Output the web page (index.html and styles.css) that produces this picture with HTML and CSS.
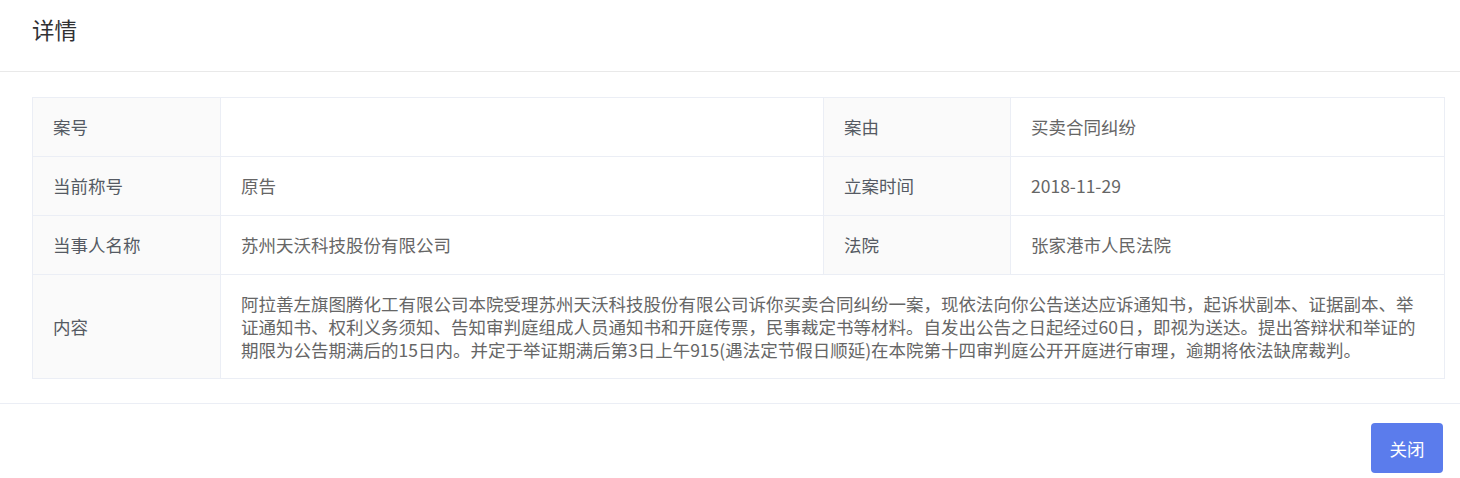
FILE: index.html
```html
<!DOCTYPE html>
<html lang="zh-CN">
<head>
<meta charset="utf-8">
<title>详情</title>
<link rel="stylesheet" href="styles.css">
</head>
<body>
<div class="dialog">
  <div class="dialog-header"><span class="dialog-title">详情</span></div>
  <div class="dialog-body">
    <table class="desc">
      <colgroup>
        <col class="c-label1">
        <col class="c-value1">
        <col class="c-label2">
        <col class="c-value2">
      </colgroup>
      <tr>
        <th class="label">案号</th>
        <td class="value"></td>
        <th class="label">案由</th>
        <td class="value">买卖合同纠纷</td>
      </tr>
      <tr>
        <th class="label">当前称号</th>
        <td class="value">原告</td>
        <th class="label">立案时间</th>
        <td class="value">2018-11-29</td>
      </tr>
      <tr>
        <th class="label">当事人名称</th>
        <td class="value">苏州天沃科技股份有限公司</td>
        <th class="label">法院</th>
        <td class="value">张家港市人民法院</td>
      </tr>
      <tr>
        <th class="label">内容</th>
        <td class="value content" colspan="3">阿拉善左旗图腾化工有限公司本院受理苏州天沃科技股份有限公司诉你买卖合同纠纷一案，现依法向你公告送达应诉通知书，起诉状副本、证据副本、举证通知书、权利义务须知、告知审判庭组成人员通知书和开庭传票，民事裁定书等材料。自发出公告之日起经过60日，即视为送达。提出答辩状和举证的期限为公告期满后的15日内。并定于举证期满后第3日上午915(遇法定节假日顺延)在本院第十四审判庭公开开庭进行审理，逾期将依法缺席裁判。</td>
      </tr>
    </table>
  </div>
  <div class="dialog-footer">
    <button class="btn-primary" type="button">关闭</button>
  </div>
</div>
</body>
</html>
```
FILE: styles.css
```css
html, body {
  margin: 0;
  padding: 0;
  background: #ffffff;
}
body {
  font-family: "Microsoft YaHei", "Noto Sans CJK SC", "Noto Sans", sans-serif;
  color: #606266;
  font-size: 17.5px;
}
.dialog {
  width: 1460px;
}
.dialog-header {
  padding: 13px 32px 26px;
  border-bottom: 1px solid #e9e9e9;
}
.dialog-title {
  display: block;
  font-size: 22.5px;
  line-height: 32px;
  color: #303133;
}
.dialog-body {
  padding: 25px 15px 24px 32px;
}
.desc {
  width: 100%;
  table-layout: fixed;
  border-collapse: collapse;
  border: 1px solid #ebeef5;
}
.c-label1 { width: 188px; }
.c-value1 { width: 603px; }
.c-label2 { width: 187px; }
.desc th,
.desc td {
  border: 1px solid #ebeef5;
  padding: 17px 20px 18px;
  line-height: 23px;
  text-align: left;
  vertical-align: middle;
  font-weight: normal;
}
.label {
  background: #fafafa;
  color: #555a63;
}
.value {
  color: #666666;
}
.desc .content {
  padding-top: 17px;
  padding-bottom: 17px;
}
.dialog-footer {
  border-top: 1px solid #ebeef5;
  padding: 19px 17px 20px;
  display: flex;
  justify-content: flex-end;
}
.btn-primary {
  width: 72px;
  height: 50px;
  border: none;
  border-radius: 4px;
  background: #5b7cec;
  color: #ffffff;
  font-family: inherit;
  font-size: 17.5px;
  padding: 0;
}
```
